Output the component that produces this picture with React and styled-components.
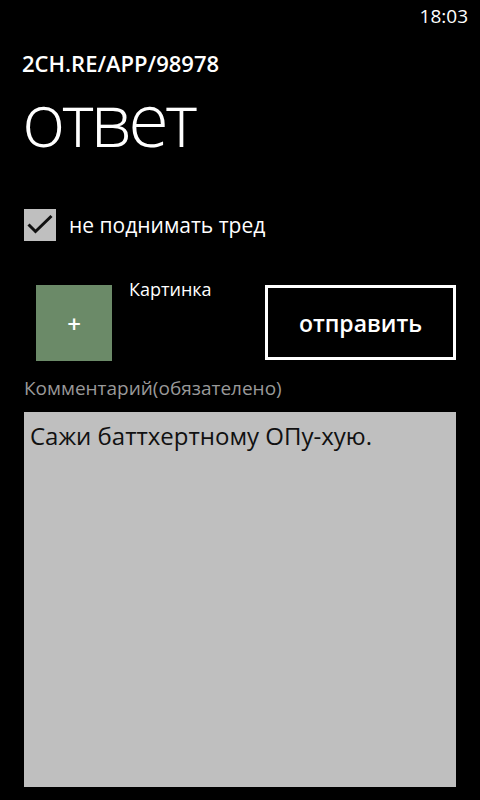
import React from 'react'
import styled, { createGlobalStyle } from 'styled-components'

const GlobalStyle = createGlobalStyle`
  html, body {
    margin: 0;
    padding: 0;
    background: #000;
  }
  body {
    font-family: "Open Sans", "Noto Sans", sans-serif;
    color: #fff;
  }
`

const App = () => {
  return (
    <>
      <GlobalStyle />
      <Page>
        <StatusBar>
          <Clock>18:03</Clock>
        </StatusBar>

        <AppTitle>2CH.RE/APP/98978</AppTitle>
        <PageTitle>ответ</PageTitle>

        <CheckRow>
          <CheckBox>
            <svg width="32" height="32" viewBox="0 0 32 32">
              <path d="M4.5 15.5 L11.5 22.5 L27.5 7" fill="none" stroke="#111" strokeWidth="3" />
            </svg>
          </CheckBox>
          <CheckLabel>не поднимать тред</CheckLabel>
        </CheckRow>

        <ActionRow>
          <AttachTile>+</AttachTile>
          <AttachLabel>Картинка</AttachLabel>
          <SendButton>отправить</SendButton>
        </ActionRow>

        <FieldLabel>Комментарий(обязателено)</FieldLabel>
        <CommentBox defaultValue="Сажи баттхертному ОПу-хую." />
      </Page>
    </>
  )
}

const Page = styled.div`
  width: 480px;
  height: 800px;
  overflow: hidden;
  display: flex;
  flex-direction: column;
  padding: 0 24px;
  box-sizing: border-box;
`

const StatusBar = styled.div`
  height: 32px;
  display: flex;
  justify-content: flex-end;
  align-items: center;
  margin-right: -12px;
`

const Clock = styled.span`
  font-size: 19px;
  line-height: 30px;
`

const AppTitle = styled.h1`
  margin: 18px 0 0 -2px;
  font-size: 22px;
  line-height: 26px;
  font-weight: 600;
`

const PageTitle = styled.h2`
  margin: -2px 0 0 -2px;
  font-size: 74px;
  line-height: 90px;
  font-weight: 300;
  letter-spacing: -4px;
`

const CheckRow = styled.label`
  margin-top: 45px;
  display: flex;
  align-items: center;
  gap: 13px;
`

const CheckBox = styled.span`
  width: 32px;
  height: 32px;
  background: #bfbfbf;
  display: flex;
`

const CheckLabel = styled.span`
  font-size: 21px;
  line-height: 32px;
`

const ActionRow = styled.div`
  margin-top: 44px;
  height: 76px;
  display: flex;
  align-items: flex-start;
`

const AttachTile = styled.div`
  width: 76px;
  height: 76px;
  margin-left: 12px;
  background: #6b8a68;
  display: flex;
  align-items: center;
  justify-content: center;
  font-size: 24px;
  font-weight: 600;
`

const AttachLabel = styled.span`
  margin: -8px 0 0 17px;
  font-size: 18px;
  line-height: 24px;
  flex: 1;
`

const SendButton = styled.button`
  width: 191px;
  height: 75px;
  border: 3px solid #fff;
  background: transparent;
  color: #fff;
  font-family: inherit;
  font-size: 23px;
  font-weight: 600;
  padding: 0;
`

const FieldLabel = styled.div`
  margin-top: 14px;
  font-size: 19px;
  line-height: 26px;
  color: #999;
`

const CommentBox = styled.textarea`
  margin-top: 11px;
  width: 432px;
  height: 375px;
  box-sizing: border-box;
  border: none;
  resize: none;
  outline: none;
  background: #bfbfbf;
  color: #111;
  font-family: inherit;
  font-size: 24px;
  line-height: 30px;
  padding: 9px 6px;
`

export default App
